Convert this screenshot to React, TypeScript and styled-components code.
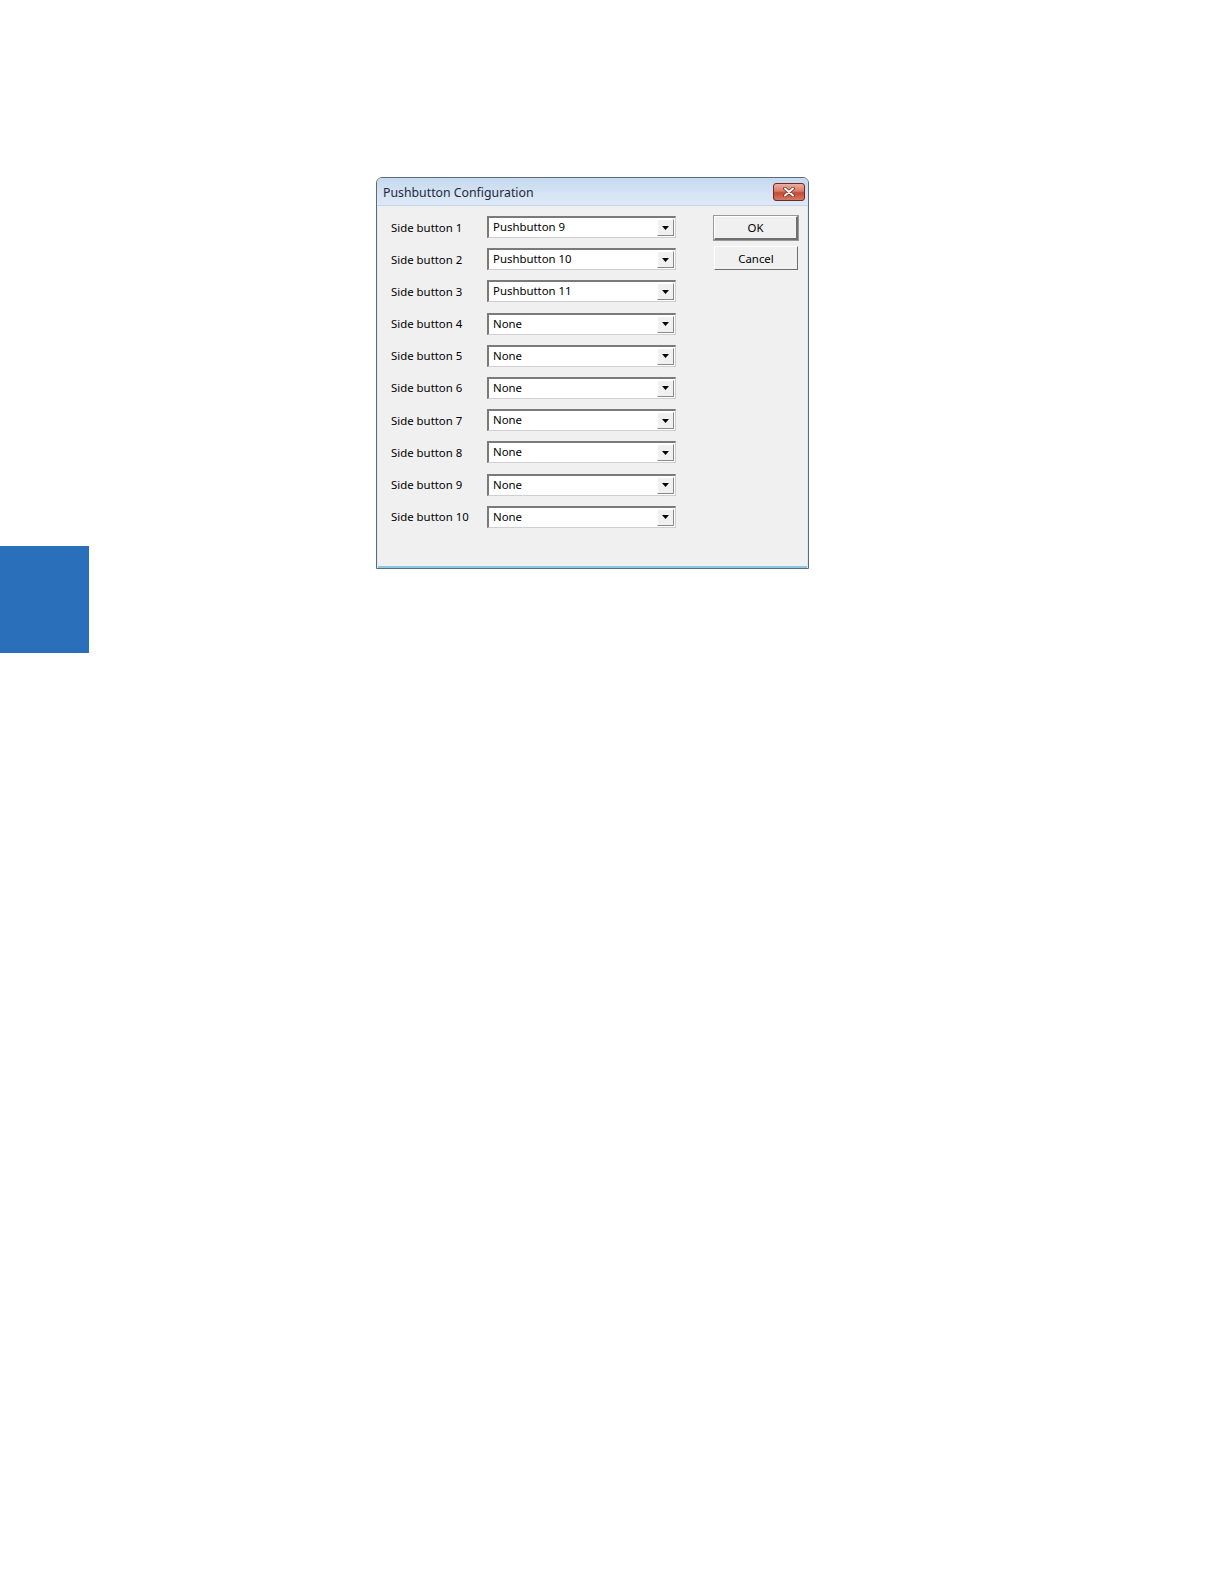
import styled, { createGlobalStyle } from "styled-components";

const GlobalStyle = createGlobalStyle`
  body {
    margin: 0;
    background: #ffffff;
    font-family: "Noto Sans", "Open Sans", sans-serif;
  }
`;

const rows = [
  { label: "Side button 1", value: "Pushbutton 9" },
  { label: "Side button 2", value: "Pushbutton 10" },
  { label: "Side button 3", value: "Pushbutton 11" },
  { label: "Side button 4", value: "None" },
  { label: "Side button 5", value: "None" },
  { label: "Side button 6", value: "None" },
  { label: "Side button 7", value: "None" },
  { label: "Side button 8", value: "None" },
  { label: "Side button 9", value: "None" },
  { label: "Side button 10", value: "None" },
];

const App = () => {
  return (
    <>
      <GlobalStyle />
      <Page>
        <SideTab />
        <Dialog>
          <TitleBar>
            <Title>Pushbutton Configuration</Title>
            <CloseButton>
              <svg width="12" height="10" viewBox="0 0 12 10">
                <path
                  d="M2 1.5 L10 8.5 M10 1.5 L2 8.5"
                  stroke="#7a2a20"
                  strokeWidth="3.6"
                  strokeLinecap="round"
                />
                <path
                  d="M2 1.5 L10 8.5 M10 1.5 L2 8.5"
                  stroke="#ffffff"
                  strokeWidth="2"
                  strokeLinecap="round"
                />
              </svg>
            </CloseButton>
          </TitleBar>
          <Body>
            <Fields>
              {rows.map((row) => (
                <Row key={row.label}>
                  <Label>{row.label}</Label>
                  <Combo>
                    <ComboText>{row.value}</ComboText>
                    <ComboArrow>
                      <svg width="7" height="4" viewBox="0 0 7 4">
                        <path d="M0 0 H7 L3.5 4 Z" fill="#000000" />
                      </svg>
                    </ComboArrow>
                  </Combo>
                </Row>
              ))}
            </Fields>
            <Actions>
              <PushButton $default>OK</PushButton>
              <PushButton>Cancel</PushButton>
            </Actions>
          </Body>
        </Dialog>
      </Page>
    </>
  );
};

const Page = styled.div`
  display: flex;
  align-items: flex-start;
`;

const SideTab = styled.div`
  flex: none;
  width: 89px;
  height: 107px;
  margin-top: 546px;
  background: #2a6fba;
`;

const Dialog = styled.div`
  flex: none;
  width: 431px;
  height: 390px;
  margin-top: 177px;
  margin-left: 287px;
  border: 1px solid #5a6b80;
  border-radius: 6px 6px 0 0;
  background: #f0f0f0;
  display: flex;
  flex-direction: column;
  overflow: hidden;
  box-shadow: inset 0 -2px 0 #8cc8e4;
`;

const TitleBar = styled.div`
  height: 27px;
  flex: none;
  display: flex;
  align-items: center;
  justify-content: space-between;
  padding: 0 3px 0 6px;
  background: linear-gradient(#c6d9ef, #d6e4f4 60%, #dde9f6);
  border-bottom: 1px solid #c5d5e8;
`;

const Title = styled.span`
  font-size: 12.3px;
  color: #1e2a3a;
  padding-top: 1px;
`;

const CloseButton = styled.div`
  width: 30px;
  height: 16px;
  border: 1px solid #6b2a22;
  border-radius: 3px;
  display: flex;
  align-items: center;
  justify-content: center;
  background: linear-gradient(#eab0a2, #d97a66 45%, #c44a34 55%, #d37a66);
`;

const Body = styled.div`
  flex: 1;
  display: flex;
  align-items: flex-start;
  padding: 10px 13px 0 13px;
  border-left: 1px solid #dfe7f1;
  border-right: 1px solid #dfe7f1;
`;

const Fields = styled.div`
  display: flex;
  flex-direction: column;
  gap: 10.2px;
`;

const Row = styled.div`
  display: flex;
  align-items: center;
  height: 22px;
`;

const Label = styled.span`
  width: 96px;
  font-size: 11.4px;
  color: #000000;
`;

const Combo = styled.div`
  width: 189px;
  height: 22px;
  box-sizing: border-box;
  display: flex;
  align-items: stretch;
  background: #ffffff;
  border-top: 2px solid #7a7a7a;
  border-left: 2px solid #7a7a7a;
  border-right: 1px solid #cfcfcf;
  border-bottom: 1px solid #cfcfcf;
`;

const ComboText = styled.span`
  flex: 1;
  padding-left: 4px;
  font-size: 11.4px;
  line-height: 18px;
  color: #000000;
`;

const ComboArrow = styled.div`
  width: 17px;
  margin: 1px;
  box-sizing: border-box;
  display: flex;
  align-items: center;
  justify-content: center;
  background: #f0f0f0;
  border-right: 1px solid #8a8a8a;
  border-bottom: 1px solid #8a8a8a;
  border-top: 1px solid #ffffff;
  border-left: 1px solid #ffffff;
`;

const Actions = styled.div`
  display: flex;
  flex-direction: column;
  gap: 6px;
  margin-left: 38px;
`;

const PushButton = styled.div<{ $default?: boolean }>`
  width: 84px;
  height: 24px;
  box-sizing: border-box;
  display: flex;
  align-items: center;
  justify-content: center;
  font-size: 11.4px;
  color: #000000;
  background: #f0f0f0;
  border-top: 1px solid #ffffff;
  border-left: 1px solid #ffffff;
  border-right: ${(p) => (p.$default ? "2px" : "1px")} solid #6e6e6e;
  border-bottom: ${(p) => (p.$default ? "2px" : "1px")} solid #6e6e6e;
  box-shadow: ${(p) => (p.$default ? "0 0 0 1px #9a9a9a" : "none")};
`;

export default App;
